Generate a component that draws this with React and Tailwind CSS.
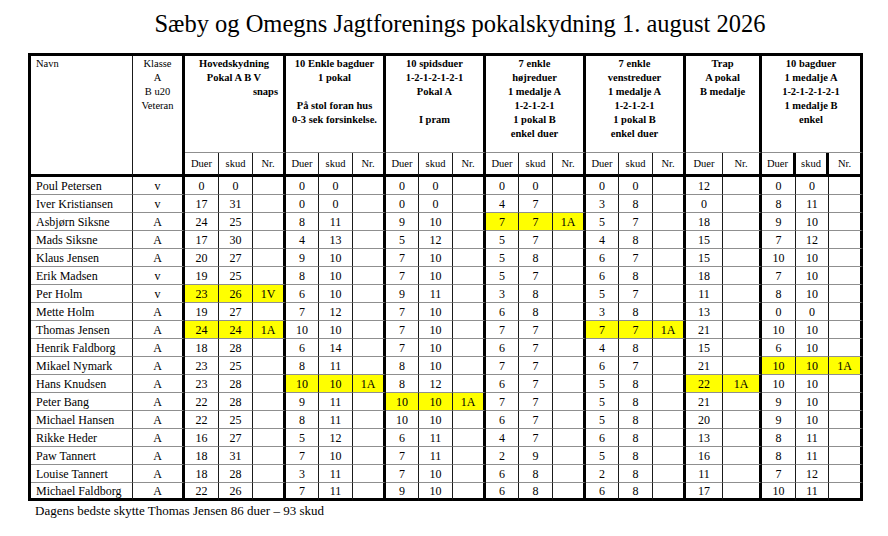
import React from "react";

const rows = [
  ["Poul Petersen", "v", [["0","0",""],["0","0",""],["0","0",""],["0","0",""],["0","0",""],["12",""],["0","0",""]], -1],
  ["Iver Kristiansen", "v", [["17","31",""],["0","0",""],["0","0",""],["4","7",""],["3","8",""],["0",""],["8","11",""]], -1],
  ["Asbjørn Siksne", "A", [["24","25",""],["8","11",""],["9","10",""],["7","7","1A"],["5","7",""],["18",""],["9","10",""]], 3],
  ["Mads Siksne", "A", [["17","30",""],["4","13",""],["5","12",""],["5","7",""],["4","8",""],["15",""],["7","12",""]], -1],
  ["Klaus Jensen", "A", [["20","27",""],["9","10",""],["7","10",""],["5","8",""],["6","7",""],["15",""],["10","10",""]], -1],
  ["Erik Madsen", "v", [["19","25",""],["8","10",""],["7","10",""],["5","7",""],["6","8",""],["18",""],["7","10",""]], -1],
  ["Per Holm", "v", [["23","26","1V"],["6","10",""],["9","11",""],["3","8",""],["5","7",""],["11",""],["8","10",""]], 0],
  ["Mette Holm", "A", [["19","27",""],["7","12",""],["7","10",""],["6","8",""],["3","8",""],["13",""],["0","0",""]], -1],
  ["Thomas Jensen", "A", [["24","24","1A"],["10","10",""],["7","10",""],["7","7",""],["7","7","1A"],["21",""],["10","10",""]], [0, 4]],
  ["Henrik Faldborg", "A", [["18","28",""],["6","14",""],["7","10",""],["6","7",""],["4","8",""],["15",""],["6","10",""]], -1],
  ["Mikael Nymark", "A", [["23","25",""],["8","11",""],["8","10",""],["7","7",""],["6","7",""],["21",""],["10","10","1A"]], 6],
  ["Hans Knudsen", "A", [["23","28",""],["10","10","1A"],["8","12",""],["6","7",""],["5","8",""],["22","1A"],["10","10",""]], [1, 5]],
  ["Peter Bang", "A", [["22","28",""],["9","11",""],["10","10","1A"],["7","7",""],["5","8",""],["21",""],["9","10",""]], 2],
  ["Michael Hansen", "A", [["22","25",""],["8","11",""],["10","10",""],["6","7",""],["5","8",""],["20",""],["9","10",""]], -1],
  ["Rikke Heder", "A", [["16","27",""],["5","12",""],["6","11",""],["4","7",""],["6","8",""],["13",""],["8","11",""]], -1],
  ["Paw Tannert", "A", [["18","31",""],["7","10",""],["7","11",""],["2","9",""],["5","8",""],["16",""],["8","11",""]], -1],
  ["Louise Tannert", "A", [["18","28",""],["3","11",""],["7","10",""],["6","8",""],["2","8",""],["11",""],["7","12",""]], -1],
  ["Michael Faldborg", "A", [["22","26",""],["7","11",""],["9","10",""],["6","8",""],["6","8",""],["17",""],["10","11",""]], -1],
];

const headers = [
  { lines: ["Hovedskydning", "Pokal A B V"], snaps: true },
  { lines: ["10 Enkle bagduer", "1 pokal", "\u00a0", "På stol foran hus", "0-3 sek forsinkelse."] },
  { lines: ["10 spidsduer", "1-2-1-2-1-2-1", "Pokal A", "\u00a0", "I pram"] },
  { lines: ["7 enkle", "højreduer", "1 medalje A", "1-2-1-2-1", "1 pokal B", "enkel duer"] },
  { lines: ["7 enkle", "venstreduer", "1 medalje A", "1-2-1-2-1", "1 pokal B", "enkel duer"] },
  { lines: ["Trap", "A pokal", "B medalje"] },
  { lines: ["10 bagduer", "1 medalje A", "1-2-1-2-1-2-1", "1 medalje B", "enkel"] },
];

const spanClass = ["col-span-3", "col-span-3", "col-span-3", "col-span-3", "col-span-3", "col-span-2", "col-span-3"];

const R_THIN = "border-r border-r-[#1a1a1a]";
const R_THICK = "border-r-[3px] border-r-black";
const B_THIN = "border-b border-b-[#8f8f8f]";
const B_THICK = "border-b-[3px] border-b-black";

function isHl(hl, g) {
  if (Array.isArray(hl)) return hl.includes(g);
  return hl === g;
}

export default function App() {
  const serif = { fontFamily: '"Liberation Serif", "Times New Roman", serif' };
  return (
    <div className="w-[888px] h-[536px] bg-white text-black overflow-hidden" style={serif}>
      <div className="pt-[10px] h-[53px] flex justify-center pl-[32px]">
        <h1 className="text-[24.5px] leading-[28px] font-normal">
          Sæby og Omegns Jagtforenings pokalskydning 1. august 2026
        </h1>
      </div>
      <div className="ml-[28px] w-[835px] border-l-[3px] border-t-[3px] border-black grid grid-cols-[102px_52px_34px_34px_33px_33px_34px_33px_33px_34px_33px_33px_34px_33px_33px_34px_33px_37px_39px_34px_33px_34px] grid-rows-[97px_24px_repeat(18,18px)]">
        {/* Header row 1 */}
        <div className={`row-span-2 ${R_THIN} ${B_THICK} pl-[5px] text-[10.5px] leading-[14px] pt-[1px]`}>Navn</div>
        <div className={`row-span-2 ${R_THICK} ${B_THICK} text-center text-[10.5px] leading-[14px] pt-[1px]`}>
          <div>Klasse</div>
          <div>A</div>
          <div>B u20</div>
          <div>Veteran</div>
        </div>
        {headers.map((h, i) => (
          <div key={i} className={`${spanClass[i]} ${R_THICK} ${B_THIN} text-center font-bold text-[10.5px] leading-[14px] pt-[1px]`}>
            {h.lines.map((l, j) => (
              <div key={j}>{l}</div>
            ))}
            {h.snaps && <div className="text-right pr-[5px]">snaps</div>}
          </div>
        ))}
        {/* Header row 2 */}
        {headers.map((h, i) => {
          const labels = i === 5 ? ["Duer", "Nr."] : ["Duer", "skud", "Nr."];
          return labels.map((lab, j) => {
            const last = j === labels.length - 1;
            const thick = last || i === 6;
            return (
              <div
                key={`${i}-${j}`}
                className={`${thick ? R_THICK : R_THIN} ${B_THICK} flex items-center justify-center text-[10.5px]`}
              >
                {lab}
              </div>
            );
          });
        })}
        {/* Data rows */}
        {rows.map((r, ri) => {
          const lastRow = ri === rows.length - 1;
          const B = lastRow ? B_THICK : B_THIN;
          return (
            <React.Fragment key={ri}>
              <div className={`${R_THIN} ${B} flex items-center pl-[5px] text-[12px] whitespace-nowrap`}>{r[0]}</div>
              <div className={`${R_THICK} ${B} flex items-center justify-center text-[12px]`}>{r[1]}</div>
              {r[2].map((g, gi) =>
                g.map((v, vi) => {
                  const last = vi === g.length - 1;
                  const hl = isHl(r[3], gi);
                  return (
                    <div
                      key={`${gi}-${vi}`}
                      className={`${last ? R_THICK : R_THIN} ${B} ${hl ? "bg-[#ffff00]" : ""} flex items-center justify-center text-[12px]`}
                    >
                      {v}
                    </div>
                  );
                })
              )}
            </React.Fragment>
          );
        })}
      </div>
      <div className="ml-[35px] text-[13px] leading-[16px] mt-[2px]">
        Dagens bedste skytte Thomas Jensen 86 duer – 93 skud
      </div>
    </div>
  );
}
